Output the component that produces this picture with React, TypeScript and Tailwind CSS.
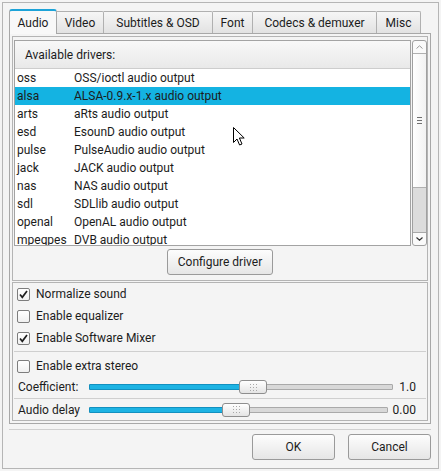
import React from 'react';

const drivers: [string, string][] = [
  ['oss', 'OSS/ioctl audio output'],
  ['alsa', 'ALSA-0.9.x-1.x audio output'],
  ['arts', 'aRts audio output'],
  ['esd', 'EsounD audio output'],
  ['pulse', 'PulseAudio audio output'],
  ['jack', 'JACK audio output'],
  ['nas', 'NAS audio output'],
  ['sdl', 'SDLlib audio output'],
  ['openal', 'OpenAL audio output'],
  ['mpegpes', 'DVB audio output'],
];

const tabs = [
  { label: 'Audio', w: 'w-[48px]' },
  { label: 'Video', w: 'w-[47px]' },
  { label: 'Subtitles & OSD', w: 'w-[109px]' },
  { label: 'Font', w: 'w-[40px]' },
  { label: 'Codecs & demuxer', w: 'w-[124px]' },
  { label: 'Misc', w: 'w-[44px]' },
];

const Check = ({ checked, label }: { checked?: boolean; label: string }) => (
  <div className="flex h-[22px] items-center gap-[6px] pl-[4px]">
    <div className="flex h-[13px] w-[13px] items-center justify-center rounded-[2px] border border-[#7d7d7d] bg-linear-to-b from-white to-[#f0f0f0]">
      {checked && (
        <svg width="11" height="11" viewBox="0 0 11 11">
          <path d="M2 5.5 L4.3 8.3 L9 2" fill="none" stroke="#1e1e1e" strokeWidth="1.7" />
        </svg>
      )}
    </div>
    <span>{label}</span>
  </div>
);

const Grip = () => (
  <div className="grid grid-cols-3 gap-[2px]">
    {Array.from({ length: 9 }).map((_, i) => (
      <div key={i} className="h-px w-px bg-[#a8a8a8]" />
    ))}
  </div>
);

const Slider = ({ label, value, fill, knob, gap }: { label: string; value: string; fill: string; knob: string; gap: string }) => (
  <div className="flex h-full items-center pl-[5px] pr-[11px]">
    <span className="w-[71px] shrink-0">{label}</span>
    <div className="relative h-[14px] flex-1">
      <div className="absolute inset-x-0 top-[4px] h-[6px] rounded-[1px] border border-[#a9a9a9] bg-[#d8d8d8]" />
      <div className={`absolute left-0 top-[4px] h-[6px] rounded-[1px] border border-[#1290bf] bg-[#1db3e3] ${fill}`} />
      <div className={`absolute top-0 flex h-[14px] w-[28px] items-center justify-center rounded-[3px] border border-[#8e8e8e] bg-linear-to-b from-white to-[#e4e4e4] ${knob}`}>
        <Grip />
      </div>
    </div>
    <span className={gap}>{value}</span>
  </div>
);

const Button = ({ children, className }: { children: React.ReactNode; className: string }) => (
  <button className={`flex h-[26px] items-center justify-center rounded-[3px] border border-[#9a9a9a] bg-linear-to-b from-[#fdfdfd] to-[#e6e6e6] ${className}`}>
    {children}
  </button>
);

export default function App() {
  return (
    <div className="relative h-[471px] w-[441px] bg-[#f4f4f4] p-[2px] font-['Roboto','Liberation_Sans',sans-serif] text-[12px] text-[#1c1c1c]">
      <div className="flex h-full flex-col border border-[#b5b5b5] pl-[6px] pr-[7px] pt-[6px]">
        {/* tab bar */}
        <div className="flex h-[24px] items-end">
          {tabs.map((t, i) =>
            i === 0 ? (
              <div
                key={t.label}
                className={`relative z-10 -mb-px flex h-[25px] items-center justify-center rounded-t-[3px] border-x border-t-2 border-x-[#a8a8a8] border-t-[#1ca3d8] bg-[#f8f8f8] ${t.w}`}
              >
                {t.label}
              </div>
            ) : (
              <div
                key={t.label}
                className={`flex h-[22px] items-center justify-center rounded-tr-[2px] border-r border-t border-[#b0b0b0] bg-linear-to-b from-[#f6f6f6] to-[#e2e2e2] ${t.w}`}
              >
                {t.label}
              </div>
            )
          )}
        </div>

        {/* tab pane */}
        <div className="flex flex-col gap-px border border-[#a8a8a8] p-[2px]">
          {/* drivers */}
          <div className="flex flex-col border border-[#b4b4b4] pb-[5px] pt-[3px]">
            <div className="flex h-[206px] gap-px pl-px">
              <div className="flex flex-1 flex-col overflow-hidden border border-[#a3a3a3] bg-white">
                <div className="flex h-[28px] shrink-0 items-center border-b border-[#cdcdcd] bg-linear-to-b from-[#f8f8f8] to-[#e9e9e9] pl-[10px]">
                  Available drivers:
                </div>
                {drivers.map(([k, d], i) => (
                  <div key={k} className={`flex h-[18px] shrink-0 items-center ${i === 1 ? 'bg-[#14b3e2]' : ''}`}>
                    <span className="w-[59px] shrink-0 overflow-hidden whitespace-nowrap pl-[2px]">{k}</span>
                    <span className="whitespace-nowrap">{d}</span>
                  </div>
                ))}
              </div>
              <div className="flex w-[15px] flex-col overflow-hidden rounded-[3px] border border-[#a0a0a0] bg-[#fafafa]">
                <div className="flex h-[12px] items-center justify-center">
                  <svg width="7" height="4" viewBox="0 0 7 4">
                    <path d="M0.5 3.5 L3.5 0.8 L6.5 3.5" fill="none" stroke="#9a9a9a" strokeWidth="1" />
                  </svg>
                </div>
                <div className="flex h-[135px] flex-col items-center justify-center gap-[2px] border-y border-[#b0b0b0] bg-linear-to-r from-white to-[#f2f2f2]">
                  <div className="h-px w-[5px] bg-[#707070]" />
                  <div className="h-px w-[5px] bg-[#707070]" />
                  <div className="h-px w-[5px] bg-[#707070]" />
                </div>
                <div className="flex-1 bg-[#dcdcdc]" />
                <div className="flex h-[13px] items-center justify-center border-t border-[#a8a8a8]">
                  <svg width="7" height="4" viewBox="0 0 7 4">
                    <path d="M0.5 0.5 L3.5 3.2 L6.5 0.5" fill="none" stroke="#333" strokeWidth="1.2" />
                  </svg>
                </div>
              </div>
            </div>
            <div className="mt-[3px] flex justify-center">
              <Button className="w-[106px]">Configure driver</Button>
            </div>
          </div>

          {/* options */}
          <div className="flex flex-col border border-[#b4b4b4]">
            <Check checked label="Normalize sound" />
            <Check label="Enable equalizer" />
            <Check checked label="Enable Software Mixer" />
            <div className="mx-px mt-[2px] h-px bg-[#cfcfcf]" />
            <div className="mt-[3px]">
              <Check label="Enable extra stereo" />
            </div>
            <div className="h-[20px]">
              <Slider label="Coefficient:" value="1.0" fill="w-[151px]" knob="left-[150px]" gap="ml-[6px]" />
            </div>
            <div className="mx-px mt-px h-px bg-[#cfcfcf]" />
            <div className="h-[21px]">
              <Slider label="Audio delay" value="0.00" fill="w-[134px]" knob="left-[133px]" gap="ml-[5px]" />
            </div>
          </div>
        </div>

        <div className="mt-[5px] h-px bg-[#d0d0d0]" />

        <div className="mt-[4px] flex justify-end gap-[13px]">
          <Button className="w-[83px]">OK</Button>
          <Button className="w-[83px]">Cancel</Button>
        </div>
      </div>

      {/* mouse pointer */}
      <svg className="absolute left-[233px] top-[127px]" width="13" height="20" viewBox="0 0 13 20">
        <path d="M0.5 0.5 L0.5 15.5 L4 12 L6.6 18 L9 17 L6.4 11 L11.2 11 Z" fill="white" stroke="black" strokeWidth="1" strokeLinejoin="round" />
      </svg>
    </div>
  );
}
